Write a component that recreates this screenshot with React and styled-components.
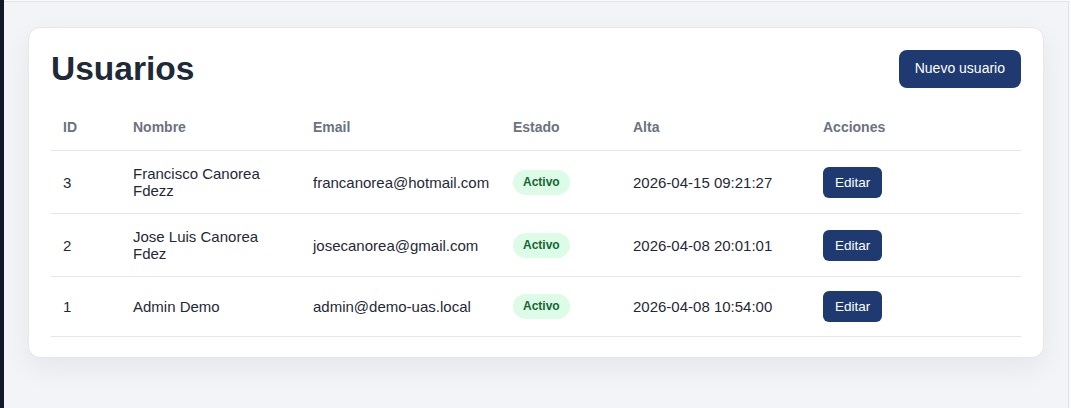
import React from 'react'
import styled, { createGlobalStyle } from 'styled-components'

const GlobalStyle = createGlobalStyle`
  html, body, #root {
    height: 100%;
  }
  body {
    margin: 0;
    background: #fafafa;
    font-family: "Liberation Sans", Arial, Helvetica, sans-serif;
    color: #1f2937;
  }
  * { box-sizing: border-box; }
`

const Layout = styled.div`
  display: flex;
  height: 100%;
`

const Sidebar = styled.aside`
  width: 4px;
  flex-shrink: 0;
  background: #111827;
`

const Main = styled.main`
  flex: 1;
  background: #f3f4f8;
  border-top: 1px solid #e3e5ea;
  border-right: 1px solid #e0e2e7;
  margin-top: 1px;
  padding: 25px 24px;
`

const ScrollStrip = styled.div`
  width: 3px;
  flex-shrink: 0;
  background: #fafafa;
`

const Card = styled.section`
  background: #fff;
  border: 1px solid #e5e7eb;
  border-radius: 12px;
  padding: 22px 22px 20px;
  box-shadow: 0 10px 28px rgba(15, 23, 42, 0.06);
`

const CardHeader = styled.div`
  display: flex;
  justify-content: space-between;
  align-items: center;
  margin-bottom: 16px;
`

const Title = styled.h1`
  margin: 0;
  font-size: 33.5px;
  font-weight: 700;
  color: #1f2937;
  line-height: 38px;
`

const Button = styled.button`
  font-family: inherit;
  border: none;
  cursor: pointer;
  color: #fff;
  background: #1e3a70;
  font-size: ${props => props.small ? '13.5px' : '14px'};
  line-height: 17px;
  padding: ${props => props.small ? '7px 12px' : '10px 16px 11px'};
  border-radius: ${props => props.small ? '6px' : '8px'};
`

const Table = styled.table`
  width: 100%;
  border-collapse: collapse;
  table-layout: fixed;
`

const Th = styled.th`
  text-align: left;
  font-size: 14px;
  font-weight: 700;
  color: #6b7280;
  line-height: 17px;
  padding: 15px 12px 14px;
  border-bottom: 1px solid #e5e7eb;
`

const Td = styled.td`
  font-size: 15px;
  line-height: 17px;
  padding: 14px 12px;
  vertical-align: middle;
  border-bottom: 1px solid #e5e7eb;
  color: #1f2937;
`

const Badge = styled.span`
  display: inline-block;
  padding: 4px 10px;
  font-size: 12px;
  line-height: 17px;
  font-weight: 700;
  color: #166534;
  background: #dcfce7;
  border-radius: 999px;
`

const columns = [
  { label: 'ID', width: 70 },
  { label: 'Nombre', width: 180 },
  { label: 'Email', width: 200 },
  { label: 'Estado', width: 120 },
  { label: 'Alta', width: 190 },
  { label: 'Acciones', width: 210 },
]

const users = [
  { id: 3, name: 'Francisco Canorea Fdezz', email: 'francanorea@hotmail.com', created: '2026-04-15 09:21:27' },
  { id: 2, name: 'Jose Luis Canorea Fdez', email: 'josecanorea@gmail.com', created: '2026-04-08 20:01:01' },
  { id: 1, name: 'Admin Demo', email: 'admin@demo-uas.local', created: '2026-04-08 10:54:00' },
]

const App = () => (
  <>
    <GlobalStyle />
    <Layout>
      <Sidebar />
      <Main>
        <Card>
          <CardHeader>
            <Title>Usuarios</Title>
            <Button>Nuevo usuario</Button>
          </CardHeader>
          <Table>
            <colgroup>
              {columns.map(c => <col key={c.label} style={{ width: c.width }} />)}
            </colgroup>
            <thead>
              <tr>
                {columns.map(c => <Th key={c.label}>{c.label}</Th>)}
              </tr>
            </thead>
            <tbody>
              {users.map(u => (
                <tr key={u.id}>
                  <Td>{u.id}</Td>
                  <Td>{u.name}</Td>
                  <Td>{u.email}</Td>
                  <Td><Badge>Activo</Badge></Td>
                  <Td>{u.created}</Td>
                  <Td><Button small>Editar</Button></Td>
                </tr>
              ))}
            </tbody>
          </Table>
        </Card>
      </Main>
      <ScrollStrip />
    </Layout>
  </>
)

export default App
